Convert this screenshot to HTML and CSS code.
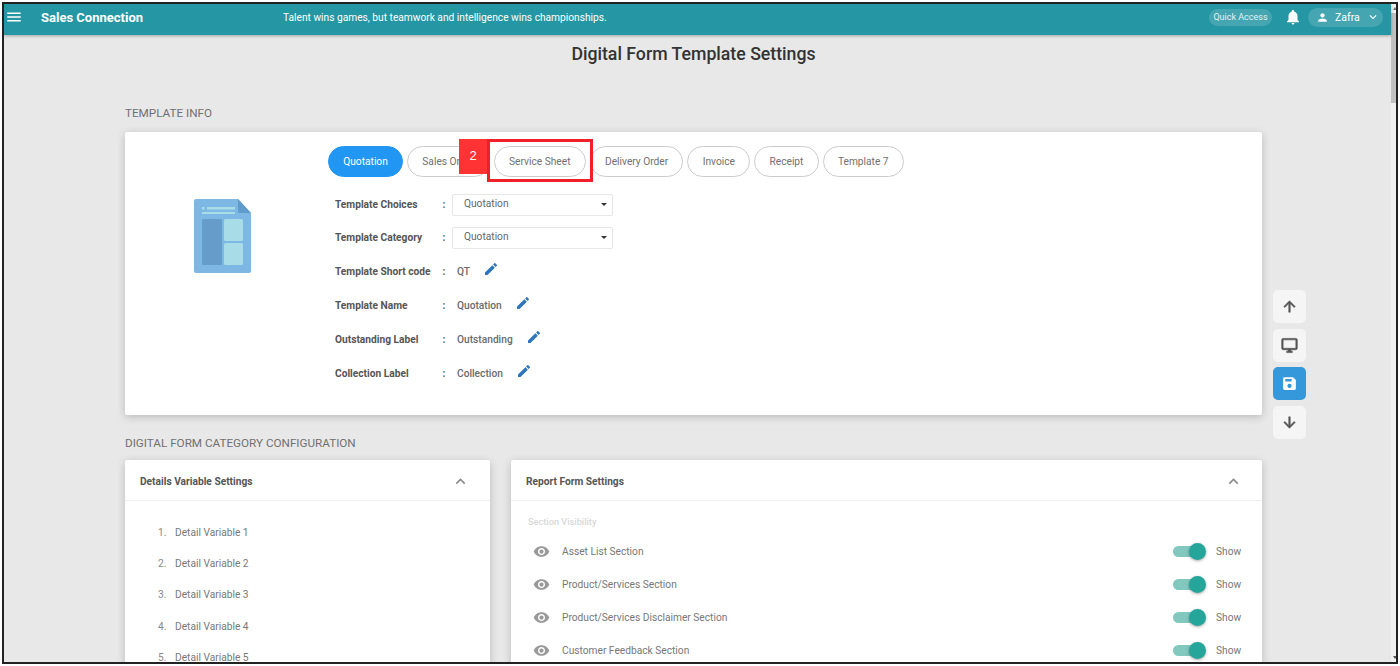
FILE: index.html
```html
<!DOCTYPE html>
<html lang="en">
<head>
<meta charset="utf-8">
<title>Digital Form Template Settings</title>
<link rel="stylesheet" href="styles.css">
</head>
<body>
<div class="screen">
  <div class="app">
    <header class="topbar">
      <svg class="menu-icon" viewBox="0 0 24 24"><path d="M3 18h18v-2H3v2zm0-5h18v-2H3v2zm0-7v2h18V6H3z"/></svg>
      <span class="brand">Sales Connection</span>
      <span class="tagline">Talent wins games, but teamwork and intelligence wins championships.</span>
      <span class="quick">Quick Access</span>
      <svg class="bell" viewBox="0 0 24 24"><path d="M12 22c1.1 0 2-.9 2-2h-4c0 1.1.9 2 2 2zm6-6v-5c0-3.07-1.63-5.64-4.5-6.32V4c0-.83-.67-1.5-1.5-1.5s-1.5.67-1.5 1.5v.68C7.64 5.36 6 7.92 6 11v5l-2 2v1h16v-1l-2-2z"/></svg>
      <span class="user">
        <svg class="user-icon" viewBox="0 0 24 24"><path d="M12 12c2.21 0 4-1.79 4-4s-1.79-4-4-4-4 1.79-4 4 1.79 4 4 4zm0 2c-2.67 0-8 1.34-8 4v2h16v-2c0-2.66-5.33-4-8-4z"/></svg>
        <span>Zafra</span>
        <svg class="user-chev" viewBox="0 0 24 24"><path d="M7.41 8.59 12 13.17l4.59-4.58L18 10l-6 6-6-6z"/></svg>
      </span>
    </header>
    <main class="main">
      <h1 class="title">Digital Form Template Settings</h1>
      <h2 class="section-label first">Template Info</h2>
      <section class="card info">
        <svg class="doc" viewBox="0 0 57 74">
          <path fill="#7db8e4" d="M2 0h42l13 14v58a2 2 0 0 1-2 2H2a2 2 0 0 1-2-2V2a2 2 0 0 1 2-2z"/>
          <path fill="#5f9bcb" d="M44 0l13 14H46a2 2 0 0 1-2-2z"/>
          <rect fill="#a8dde8" x="8" y="8" width="2.5" height="2.5"/>
          <rect fill="#a8dde8" x="13" y="8" width="28" height="2.5"/>
          <rect fill="#a8dde8" x="8" y="13" width="33" height="2"/>
          <rect fill="#659cc9" x="8" y="20" width="20" height="46" rx="1.5"/>
          <rect fill="#a8dde8" x="30" y="20" width="19" height="22" rx="1.5"/>
          <rect fill="#a8dde8" x="30" y="44" width="19" height="22" rx="1.5"/>
        </svg>
        <div class="info-body">
          <div class="tabs">
            <span class="tab active">Quotation</span>
            <span class="tab">Sales Order</span>
            <span class="tab">Service Sheet</span>
            <span class="tab">Delivery Order</span>
            <span class="tab">Invoice</span>
            <span class="tab">Receipt</span>
            <span class="tab">Template 7</span>
          </div>
          <div class="field sel">
            <span class="f-label">Template Choices</span><span class="f-colon">:</span>
            <span class="select">Quotation<i class="caret"></i></span>
          </div>
          <div class="field sel">
            <span class="f-label">Template Category</span><span class="f-colon">:</span>
            <span class="select">Quotation<i class="caret"></i></span>
          </div>
          <div class="field">
            <span class="f-label">Template Short code</span><span class="f-colon">:</span>
            <span class="f-value">QT</span>
            <svg class="edit" viewBox="0 0 24 24"><path d="M3 17.25V21h3.75L17.81 9.94l-3.75-3.75L3 17.25zM20.71 7.04a1 1 0 0 0 0-1.41l-2.34-2.34a1 1 0 0 0-1.41 0l-1.83 1.83 3.75 3.75 1.83-1.83z"/></svg>
          </div>
          <div class="field">
            <span class="f-label">Template Name</span><span class="f-colon">:</span>
            <span class="f-value">Quotation</span>
            <svg class="edit" viewBox="0 0 24 24"><path d="M3 17.25V21h3.75L17.81 9.94l-3.75-3.75L3 17.25zM20.71 7.04a1 1 0 0 0 0-1.41l-2.34-2.34a1 1 0 0 0-1.41 0l-1.83 1.83 3.75 3.75 1.83-1.83z"/></svg>
          </div>
          <div class="field">
            <span class="f-label">Outstanding Label</span><span class="f-colon">:</span>
            <span class="f-value">Outstanding</span>
            <svg class="edit" viewBox="0 0 24 24"><path d="M3 17.25V21h3.75L17.81 9.94l-3.75-3.75L3 17.25zM20.71 7.04a1 1 0 0 0 0-1.41l-2.34-2.34a1 1 0 0 0-1.41 0l-1.83 1.83 3.75 3.75 1.83-1.83z"/></svg>
          </div>
          <div class="field">
            <span class="f-label">Collection Label</span><span class="f-colon">:</span>
            <span class="f-value">Collection</span>
            <svg class="edit" viewBox="0 0 24 24"><path d="M3 17.25V21h3.75L17.81 9.94l-3.75-3.75L3 17.25zM20.71 7.04a1 1 0 0 0 0-1.41l-2.34-2.34a1 1 0 0 0-1.41 0l-1.83 1.83 3.75 3.75 1.83-1.83z"/></svg>
          </div>
        </div>
      </section>
      <h2 class="section-label second">Digital Form Category Configuration</h2>
      <div class="columns">
        <section class="card details">
          <div class="card-head">
            <span>Details Variable Settings</span>
            <svg class="collapse" viewBox="0 0 24 24"><path d="M12 8l-6 6 1.41 1.41L12 10.83l4.59 4.58L18 14z"/></svg>
          </div>
          <ol class="vars">
            <li>Detail Variable 1</li>
            <li>Detail Variable 2</li>
            <li>Detail Variable 3</li>
            <li>Detail Variable 4</li>
            <li>Detail Variable 5</li>
          </ol>
        </section>
        <section class="card report">
          <div class="card-head">
            <span>Report Form Settings</span>
            <svg class="collapse" viewBox="0 0 24 24"><path d="M12 8l-6 6 1.41 1.41L12 10.83l4.59 4.58L18 14z"/></svg>
          </div>
          <div class="report-body">
            <div class="vis-title">Section Visibility</div>
            <div class="vis-row">
              <svg class="eye" viewBox="0 0 24 24"><path d="M12 4.5C7 4.5 2.73 7.61 1 12c1.73 4.39 6 7.5 11 7.5s9.27-3.11 11-7.5c-1.73-4.39-6-7.5-11-7.5zM12 17c-2.76 0-5-2.24-5-5s2.24-5 5-5 5 2.24 5 5-2.24 5-5 5zm0-8c-1.66 0-3 1.34-3 3s1.34 3 3 3 3-1.34 3-3-1.34-3-3-3z"/></svg>
              <span class="vis-name">Asset List Section</span>
              <span class="toggle"></span><span class="show">Show</span>
            </div>
            <div class="vis-row">
              <svg class="eye" viewBox="0 0 24 24"><path d="M12 4.5C7 4.5 2.73 7.61 1 12c1.73 4.39 6 7.5 11 7.5s9.27-3.11 11-7.5c-1.73-4.39-6-7.5-11-7.5zM12 17c-2.76 0-5-2.24-5-5s2.24-5 5-5 5 2.24 5 5-2.24 5-5 5zm0-8c-1.66 0-3 1.34-3 3s1.34 3 3 3 3-1.34 3-3-1.34-3-3-3z"/></svg>
              <span class="vis-name">Product/Services Section</span>
              <span class="toggle"></span><span class="show">Show</span>
            </div>
            <div class="vis-row">
              <svg class="eye" viewBox="0 0 24 24"><path d="M12 4.5C7 4.5 2.73 7.61 1 12c1.73 4.39 6 7.5 11 7.5s9.27-3.11 11-7.5c-1.73-4.39-6-7.5-11-7.5zM12 17c-2.76 0-5-2.24-5-5s2.24-5 5-5 5 2.24 5 5-2.24 5-5 5zm0-8c-1.66 0-3 1.34-3 3s1.34 3 3 3 3-1.34 3-3-1.34-3-3-3z"/></svg>
              <span class="vis-name">Product/Services Disclaimer Section</span>
              <span class="toggle"></span><span class="show">Show</span>
            </div>
            <div class="vis-row">
              <svg class="eye" viewBox="0 0 24 24"><path d="M12 4.5C7 4.5 2.73 7.61 1 12c1.73 4.39 6 7.5 11 7.5s9.27-3.11 11-7.5c-1.73-4.39-6-7.5-11-7.5zM12 17c-2.76 0-5-2.24-5-5s2.24-5 5-5 5 2.24 5 5-2.24 5-5 5zm0-8c-1.66 0-3 1.34-3 3s1.34 3 3 3 3-1.34 3-3-1.34-3-3-3z"/></svg>
              <span class="vis-name">Customer Feedback Section</span>
              <span class="toggle"></span><span class="show">Show</span>
            </div>
          </div>
        </section>
      </div>
    </main>
  </div>
  <div class="scrollbar">
    <span class="sb-arrow up"></span>
    <span class="sb-thumb"></span>
    <span class="sb-arrow down"></span>
  </div>
  <div class="fabs">
    <span class="fab"><svg viewBox="0 0 24 24"><path d="M4 12l1.41 1.41L11 7.83V20h2V7.83l5.58 5.59L20 12l-8-8z"/></svg></span>
    <span class="fab"><svg viewBox="0 0 24 24"><path d="M21 2H3c-1.1 0-2 .9-2 2v12c0 1.1.9 2 2 2h7v2H8v2h8v-2h-2v-2h7c1.1 0 2-.9 2-2V4c0-1.1-.9-2-2-2zm0 14H3V4h18v12z"/></svg></span>
    <span class="fab save"><svg viewBox="0 0 24 24"><path d="M17 3H5a2 2 0 0 0-2 2v14a2 2 0 0 0 2 2h14a2 2 0 0 0 2-2V7l-4-4zm-5 15.500a3 3 0 1 1 0-6 3 3 0 0 1 0 6zM15 9H6V5.500h9V9z"/></svg></span>
    <span class="fab"><svg viewBox="0 0 24 24"><path d="M20 12l-1.410-1.410L13 16.170V4h-2v12.170l-5.580-5.590L4 12l8 8z"/></svg></span>
  </div>
  <div class="callout"><span class="callout-num">2</span><span class="callout-box"></span></div>
</div>
</body>
</html>
```
FILE: styles.css
```css
* { box-sizing: border-box; }
html, body { margin: 0; height: 100%; background: #fff; overflow: hidden; }
body { padding: 2px; font-family: Roboto, "Liberation Sans", sans-serif; }
.screen {
  position: relative; width: 1396px; height: 662px; display: flex;
  border: 2px solid #222; overflow: hidden; background: #e8e8e8;
}
.app { width: 1387px; display: flex; flex-direction: column; flex: none; }
.topbar {
  height: 31px; flex: none; display: flex; align-items: center; background: #2596a3; padding-bottom: 5px;
  color: #fff; box-shadow: 0 1px 3px rgba(0,0,0,.3); position: relative; z-index: 1;
}
.menu-icon { width: 18px; height: 18px; fill: #fff; margin-left: 1px; flex: none; }
.brand { font-size: 13px; font-weight: 700; margin-left: 18px; width: 242px; flex: none; }
.tagline { font-size: 10.200px; flex: 1; }
.quick {
  font-size: 9px; width: 63px; text-align: center; height: 17px; line-height: 16px; border-radius: 9px;
  background: rgba(255,255,255,.15); color: #e4f3f4;
}
.bell { width: 18px; height: 18px; fill: #fff; margin-left: 12px; }
.user {
  display: flex; align-items: center; height: 19px; width: 75px; border-radius: 10px;
  background: rgba(255,255,255,.15); margin: 0 8px 0 6px; font-size: 10.500px; padding-left: 8px;
}
.user-icon { width: 13px; height: 13px; fill: #fff; margin-right: 6px; }
.user-chev { width: 14px; height: 14px; fill: #fff; margin-left: 6px; }
.main { flex: 1; min-height: 0; overflow: hidden; padding-left: 121px; }
.title { margin: 8px 0 0 0; width: 1137px; text-align: center; font-size: 17.700px; line-height: 22px; font-weight: 500; color: #333; }
.section-label { margin: 0; font-size: 11.700px; line-height: 14px; font-weight: 400; color: #707070; text-transform: uppercase; }
.section-label.first { margin-top: 41px; }
.section-label.second { margin-top: 21px; }
.card { background: #fff; border-radius: 2px; box-shadow: 0 2px 8px rgba(0,0,0,.2); }
.info { margin-top: 12px; width: 1137px; height: 283px; display: flex; }
.doc { width: 57px; height: 74px; margin: 67px 0 0 69px; flex: none; }
.info-body { margin-left: 77px; padding-top: 14px; }
.tabs { display: flex; gap: 4px; margin-bottom: 11px; }
.tab {
  font-size: 10.200px; height: 31px; line-height: 29px; padding: 0 14.250px; border: 1px solid #ccc;
  border-radius: 16px; color: #707070; white-space: nowrap;
}
.tab.active { background: #2196f3; border-color: #2196f3; color: #fff; }
.field { display: flex; align-items: center; height: 34px; font-size: 10.200px; padding-left: 7px; color: #666; }
.field.sel { height: 33px; }
.f-label { width: 107.500px; font-weight: 700; color: #555; }
.f-colon { width: 14.500px; font-weight: 700; }
.f-value { font-weight: 500; color: #6a6a6a; }
.edit { width: 16px; height: 16px; fill: #2f75bb; margin-left: 13px; margin-top: -4px; }
.select {
  position: relative; width: 161px; height: 22px; line-height: 18px; padding-left: 11px;
  margin-left: -5px; background: #fff; border: 1px solid #e6e6e6; border-radius: 2px; color: #666;
}
.caret {
  position: absolute; right: 5px; top: 8px; width: 0; height: 0;
  border-left: 3px solid transparent; border-right: 3px solid transparent; border-top: 3px solid #333;
}
.columns { display: flex; gap: 21px; margin-top: 10px; width: 1137px; align-items: flex-start; }
.details { width: 365px; height: 300px; flex: none; }
.report { flex: 1; height: 300px; }
.card-head {
  height: 41px; display: flex; align-items: center; justify-content: space-between;
  padding: 2px 20px 0 15px; border-bottom: 1px solid #f0f0f0; font-size: 10.200px; font-weight: 700; color: #555;
}
.report .card-head { padding-right: 19px; }
.collapse { width: 19px; height: 19px; fill: #888; }
.vars { margin: 15.500px 0 0 0; padding: 0 0 0 44px; font-size: 10.200px; color: #777; }
.vars li { height: 31.400px; line-height: 31.400px; padding-left: 6px; }
.vars li::marker { color: #888; }
.report-body { padding: 14px 10px 0 17px; }
.vis-title { font-size: 9.200px; font-weight: 500; color: #d8d8d8; line-height: 14px; margin-bottom: 6.500px; }
.vis-row { display: flex; align-items: center; height: 32.800px; font-size: 10.200px; color: #777; padding-left: 5px; }
.eye { width: 17px; height: 17px; fill: #999; margin-right: 12px; flex: none; }
.vis-name { flex: 1; }
.toggle { position: relative; width: 32px; height: 11px; border-radius: 6px; background: #82c8bf; }
.toggle::after {
  content: ""; position: absolute; right: -1px; top: -3px; width: 17px; height: 17px; border-radius: 50%;
  background: #26a69a; box-shadow: 0 1px 3px rgba(0,0,0,.35);
}
.show { width: 36px; margin-left: 11px; }
.scrollbar { flex: 1; display: flex; flex-direction: column; align-items: stretch; background: #f1f1f1; }
.sb-arrow { height: 9px; flex: none; position: relative; }
.sb-arrow.up::after, .sb-arrow.down::after {
  content: ""; position: absolute; left: 2px; top: 3px; border-left: 2px solid transparent; border-right: 2px solid transparent;
}
.sb-arrow.up::after { border-bottom: 3px solid #777; }
.sb-arrow.down::after { border-top: 3px solid #555; }
.sb-thumb { height: 90px; background: #c1c1c1; margin-bottom: auto; }
.fabs { position: absolute; left: 1269px; top: 286px; display: flex; flex-direction: column; gap: 5.500px; }
.fab {
  width: 33px; height: 33px; border-radius: 5px; background: #f5f5f5; display: flex; align-items: center; justify-content: center;
}
.fab svg { width: 17px; height: 17px; fill: #555; stroke: #555; stroke-width: 0.900px; }
.fab.save { background: #3498db; }
.fab.save svg { fill: #fff; stroke: none; }
.callout { position: absolute; left: 455px; top: 135px; display: flex; align-items: flex-start; }
.callout-num {
  width: 28px; height: 35px; background: #ff3333; color: #fff; font: 13px/34px "Liberation Sans", sans-serif; text-align: center;
}
.callout-box { width: 106px; height: 43px; border: 3px solid #f0202a; }
```
